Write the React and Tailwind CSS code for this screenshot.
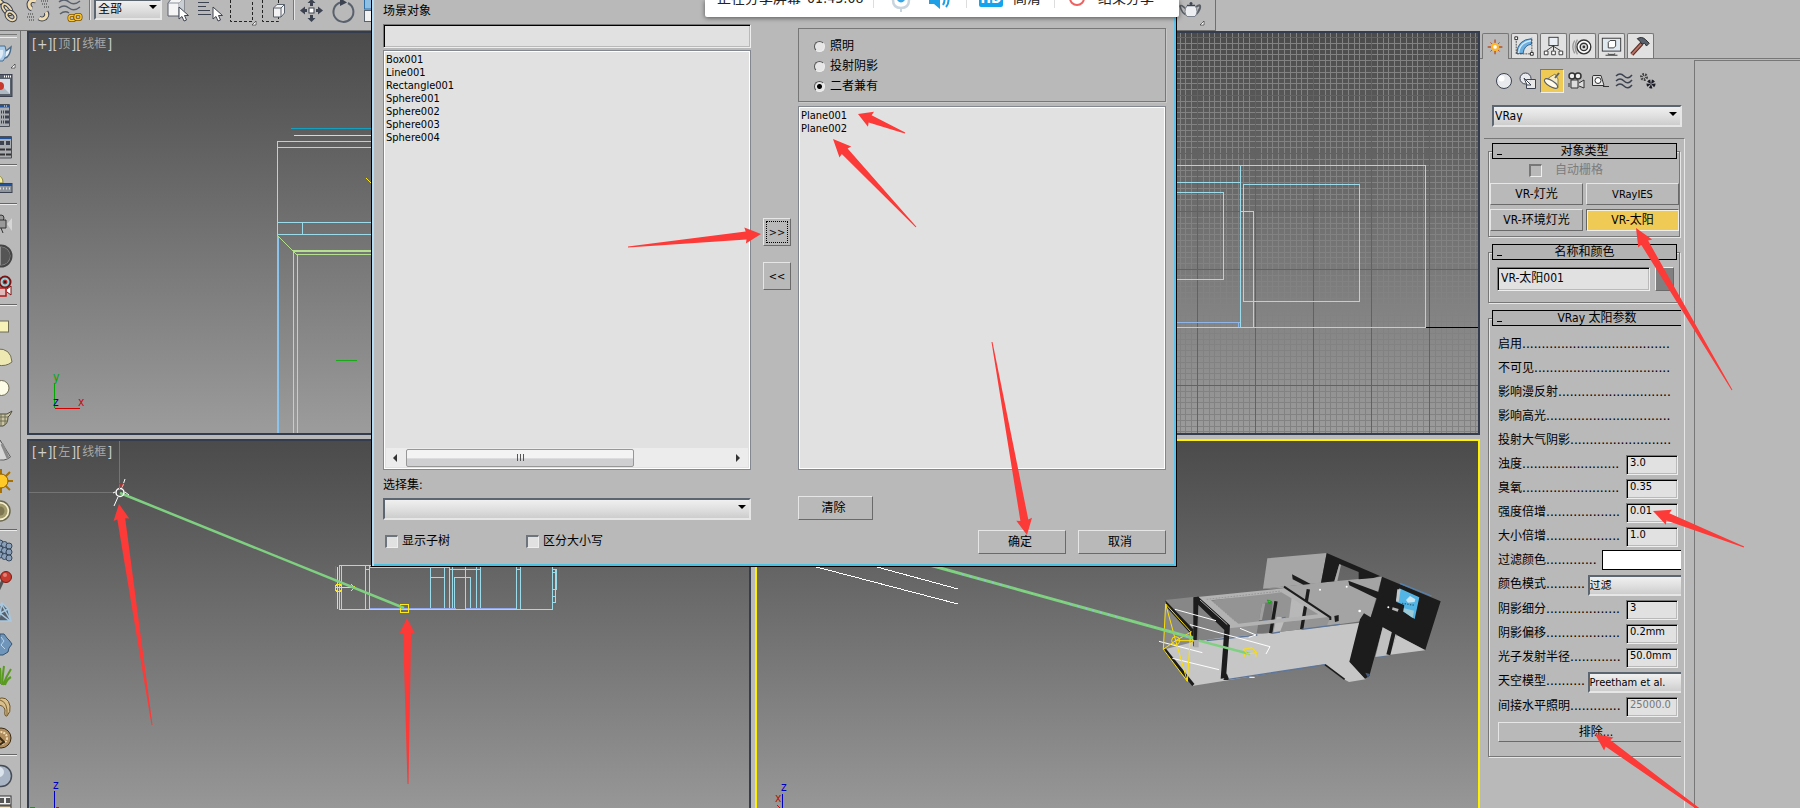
import React from "react";

const RAISED =
  "border border-t-[#e6e6e6] border-l-[#e6e6e6] border-b-[#6a6a6a] border-r-[#6a6a6a] bg-[#b9b9b9]";
const SUNKEN =
  "border border-t-[#777] border-l-[#777] border-b-[#eee] border-r-[#eee] bg-[#e1e1e1] shadow-[inset_1px_1px_0_#000,inset_-1px_-1px_0_#b9b9b9]";
const COMBO =
  "appearance-none border-2 border-t-[#5c6670] border-l-[#5c6670] border-b-[#e6e6e6] border-r-[#e6e6e6] bg-linear-to-b from-[#f0f0f0] via-[#e0e0e0] via-50% to-[#cdcdcd] text-black";

/* ---------- main toolbar ---------- */

function Tool({ x, w, label, children }) {
  return (
    <button type="button" aria-label={label} className="block shrink-0">
      <svg width={w} height="30" viewBox={`${x} 0 ${w} 30`} fill="none">
        {children}
      </svg>
    </button>
  );
}

function Cursor({ x, y }) {
  return (
    <path
      transform={`translate(${x} ${y})`}
      d="M0 0 L0 12 L3 9.5 L5 14 L7.500 13 L5.500 8.500 L9.500 8.500 Z"
      fill="#fff"
      stroke="#3c4250"
    />
  );
}

function Chain({ d, color = "#3c4250", fill = "#f0dcae" }) {
  return (
    <>
      <path d={d} stroke={color} strokeWidth="5" />
      <path d={d} stroke={fill} strokeWidth="3" />
    </>
  );
}

function TeapotShape() {
  return (
    <>
      <path d="M1186 9 Q1181 4 1180 6 Q1182 14 1187 15" stroke="#5b6068" strokeWidth="1.500" />
      <path d="M1196 7 Q1201 3 1200 8 Q1199 12 1195 15" stroke="#5b6068" strokeWidth="2" />
      <path d="M1187 5.500 H1195 Q1199 12 1195 16.500 H1187 Q1183 12 1187 5.500Z" fill="#eceef1" stroke="#7d838c" />
      <path d="M1187 5.500h8" stroke="#3c4250" strokeWidth="1.500" />
      <circle cx="1191" cy="3.500" r="1.500" fill="#3c4250" />
    </>
  );
}

function MainToolbar() {
  return (
    <header className="flex h-[31px] shrink-0">
      <div className="flex max-w-[1216px] flex-1 justify-between border-r border-b border-[#6f6f6f]">
        <div className="flex">
          <Tool x={0} w={24} label="选择并链接">
            <Chain d="M-2 0 Q4 4 7 9" />
            <ellipse cx="7" cy="9" rx="6" ry="3" transform="rotate(50 7 9)" stroke="#3c4250" strokeWidth="4" />
            <ellipse cx="7" cy="9" rx="6" ry="3" transform="rotate(50 7 9)" stroke="#f0dcae" strokeWidth="2" />
            <ellipse cx="11" cy="16" rx="5" ry="3.500" transform="rotate(40 11 16)" stroke="#3c4250" strokeWidth="4" />
            <ellipse cx="11" cy="16" rx="5" ry="3.500" transform="rotate(40 11 16)" stroke="#f0dcae" strokeWidth="2" />
          </Tool>
          <Tool x={24} w={30} label="取消链接选择">
            <Chain d="M36 1 Q30 -1 29 4 Q29 8 32 9" />
            <Chain d="M46 12 Q48 15 45 18 Q42 20 39 18" />
            <path d="M41 1h7M42 4h6M44 7h5M28 14h6M27 17h7M29 20h6" stroke="#777" strokeWidth="2" strokeDasharray="1 1" />
          </Tool>
          <Tool x={54} w={34} label="绑定到空间扭曲">
            <path d="M59 2q5-4 10 0t11-1M59 8q5-4 10 0t11-1M60 14q5-4 9 -1" stroke="#59616d" strokeWidth="1.500" />
            <rect x="69" y="15.500" width="6" height="5" rx="2" stroke="#7a4d00" strokeWidth="3" />
            <rect x="69" y="15.500" width="6" height="5" rx="2" stroke="#ffc928" strokeWidth="1.500" />
            <rect x="75" y="14.500" width="6" height="5" rx="2" stroke="#7a4d00" strokeWidth="3" />
            <rect x="75" y="14.500" width="6" height="5" rx="2" stroke="#ffc928" strokeWidth="1.500" />
          </Tool>
          <div className="mr-1 ml-px h-5 w-px bg-[#777] shadow-[1px_0_0_#e6e6e6]" />
          <div className="relative -mt-1 h-[21px] w-[68px]">
            <select
              aria-label="选择过滤器"
              className={`h-full w-full pl-0.5 text-[12px] leading-none ${COMBO}`}
            >
              <option>全部</option>
            </select>
            <span className="pointer-events-none absolute top-[9px] right-[5px] border-x-4 border-t-4 border-x-transparent border-t-black" />
          </div>
          <Tool x={162} w={32} label="选择对象">
            <path d="M168 3 L172 -2 H184 V11 L179 16 H168Z" fill="#f5f5f5" stroke="#59616d" />
            <path d="M168 3H179V16M179 3L184 -2" stroke="#8b929b" />
            <path d="M179 3L184 -2V11L179 16Z" fill="#c9ced4" />
            <Cursor x={179} y={7} />
          </Tool>
          <Tool x={194} w={32} label="按名称选择">
            <path d="M198 2.500h11M198 6.500h8M198 10.500h12M198 14.500h13" stroke="#3c4250" />
            <Cursor x={213} y={7} />
          </Tool>
          <Tool x={226} w={32} label="矩形选择区域">
            <path d="M230.500 0V21.500H252.500V0" stroke="#222" strokeDasharray="3 2" />
            <path d="M256 21v4h-4z" fill="#fff" stroke="#000" strokeWidth=".5" />
          </Tool>
          <Tool x={258} w={32} label="窗口交叉">
            <path d="M262.500 0V21.500H278.500V17M278.500 0V4" stroke="#222" strokeDasharray="3 2" />
            <path d="M273.500 8 L277 4.500 H284.500 V13 L281 17 H273.500Z" fill="#f3f3f3" stroke="#59616d" />
            <path d="M273.500 8H281V17M281 8L284.500 4.500" stroke="#59616d" />
          </Tool>
          <div className="mx-[3px] h-5 w-px bg-[#777] shadow-[1px_0_0_#e6e6e6]" />
          <Tool x={297} w={30} label="选择并移动">
            <rect x="309" y="8" width="5" height="5" fill="#fff" stroke="#3c4250" />
            <path d="M303 10.500h4M316 10.500h4M311.500 2v4M311.500 15v4" stroke="#3c4250" strokeWidth="3" />
            <path d="M300 10.500l5-4v8zM323 10.500l-5-4v8zM311.500 -1l-4 4h8zM311.500 22l-4-4h8z" fill="#3c4250" />
          </Tool>
          <Tool x={327} w={33} label="选择并旋转">
            <path d="M340 2.500 A10 10 0 1 0 348 3" stroke="#59616d" strokeWidth="2" />
            <path d="M340 -2l7 4.500l-7 3.500z" fill="#3c4250" />
          </Tool>
          <Tool x={360} w={14} label="选择并缩放">
            <rect x="364.500" y="-4" width="12" height="13" fill="#8fc0e4" stroke="#2f6ea5" />
            <rect x="364.500" y="10.500" width="12" height="11" fill="#f2f2f2" stroke="#59616d" />
          </Tool>
        </div>
        <Tool x={1178} w={37} label="渲染产品">
          <TeapotShape />
          <path d="M1204 21v4h-4z" fill="#fff" stroke="#000" strokeWidth=".5" />
        </Tool>
      </div>
    </header>
  );
}

/* ---------- left strip ---------- */

const Win = ({ children }) => (
  <>
    <path d="M-4 4.500H9.500V26.500H-4Z" fill="#a9adb2" stroke="#4a4f57" />
    <path d="M-4 5H9V7.500H-4Z" fill="#20539b" />
    <path d="M4 6h4" stroke="#fff" strokeDasharray="1 1" />
    {children}
  </>
);

const SIDE_ICONS = [
  [
    ["茶壶", <><path d="M-2 8H5Q8 17 3 23H-2Z" fill="#a9cbe8" stroke="#4b6d8c" /><path d="M-2 12h5q1 6-3 9" fill="#dcebf6" /><path d="M6 13l5-4q-1 10-6 11" stroke="#4b6d8c" strokeWidth="1.500" fill="#e8f1f8" /><path d="M15 26v4h-4z" fill="#fff" stroke="#000" strokeWidth=".5" /></>],
    ["渲染帧窗口", <><rect x="-4" y="5.500" width="16" height="22" fill="#59616d" stroke="#3c4250" /><path d="M4 7.500h8" stroke="#fff" strokeWidth="2" strokeDasharray="1 1" /><rect x="-4" y="10" width="14" height="15" fill="#d5dce3" /><path d="M2 17l8 8h-12z" fill="#aeb9c4" /><circle cx="0" cy="17" r="4" fill="#c9382c" /></>],
    ["渲染设置", <Win><path d="M1 12h8M1 17h8M1 22h8" stroke="#3c4250" strokeWidth="3" strokeDasharray="1 1 1 1 4 0" /></Win>],
    ["曝光控制", <><path d="M-4 5.500H11.500V27H-4Z" fill="#a9adb2" stroke="#4a4f57" /><path d="M-4 6H11V8H-4Z" fill="#20539b" /><path d="M0 10h4v4H0zM6 10h4v4H6z" fill="#3c4250" /><path d="M0 18.500h11M0 23.500h11" stroke="#333" strokeWidth="2" strokeDasharray="5 1" /></>],
  ],
  [
    ["灯光列表", <><path d="M-2 6q5 0 5 7h-5z" fill="#f4eda5" stroke="#8d8748" /><rect x="-3" y="13.500" width="15" height="9" fill="#8e949b" stroke="#3c4250" /><path d="M-3 15h15" stroke="#20539b" strokeWidth="2" /><path d="M0 18.500h10" stroke="#ddd" strokeWidth="2" strokeDasharray="1 2" /></>],
  ],
  [
    ["摄影机", <><circle cx="1" cy="9" r="3" stroke="#333" fill="#999" /><path d="M-3 11H6V19H-3ZM1 19l2 5" stroke="#333" fill="#999" /><path d="M7 15l5-6v13z" fill="#d6d6d6" /></>],
    ["对比度", <><circle cx="1" cy="16" r="10.500" fill="#8e8e8e" stroke="#444" strokeWidth="2" /><path d="M1 7a9 9 0 0 1 0 18z" fill="#555" /></>],
    ["VR 摄影机", <><circle cx="5" cy="11" r="5.500" fill="#8fd3dc" stroke="#7a1313" strokeWidth="2" /><circle cx="5" cy="11" r="2" fill="#222" stroke="#d22" /><path d="M-2 17H6V25H-2Z" fill="#e2b9b9" stroke="#b01717" strokeWidth="1.500" /><path d="M7 18l4-3v9l-4-3" fill="#fff" stroke="#7a1313" /></>],
  ],
  [
    ["平面灯光", <rect x="-4" y="11" width="12.500" height="11" fill="#f7f3b8" stroke="#6f6c55" />],
    ["穹顶灯光", <path d="M-3 8Q11 7 12 21Q6 26 -3 24Z" fill="#eee9b3" stroke="#6f6c55" />],
    ["球体灯光", <circle cx="1.500" cy="16" r="7.500" fill="#fdfce6" stroke="#6f6c55" />],
    ["网格灯光", <><path d="M-3 11H7l5-3q-2 5-4 6Q8 21 3 23H-3Z" fill="#c9c5a3" stroke="#4c4a3c" /><path d="M-3 14h11M-3 18h10M1 11v12M5 11v11" stroke="#6f6c55" /></>],
    ["IES 灯光", <><path d="M0 6L10.500 23Q4 28 -3 25Z" fill="#d7d7d7" stroke="#5c5c5c" /><path d="M2 10l6 14" stroke="#8a8a8a" strokeWidth="3" /></>],
    ["VR 太阳", <><path d="M-11 16h24M1 4v24M-8 8l18 17M10 7l-18 18" stroke="#a87000" strokeWidth="2" /><circle cx="1" cy="16" r="7" fill="#ffc928" stroke="#8a5b00" /></>],
    ["环境灯光", <><circle cx="0" cy="15" r="10" fill="#f4eecb" stroke="#6b684f" strokeWidth="1.500" /><circle cx="0" cy="15" r="7.500" fill="#a39b6e" /><circle cx="0" cy="15" r="4.500" fill="#7d7651" /></>],
  ],
  [
    ["实例", <>{[0, 1, 2].map((i) => [0, 1, 2].map((j) => <circle key={`${i}${j}`} cx={i * 4.5} cy={8 + j * 6 + i * 1.5} r="3" fill="#8aa0b8" stroke="#36475a" />))}</>],
    ["位移", <><path d="M4 12L-2 25" stroke="#555" strokeWidth="3" /><circle cx="6" cy="11" r="5.500" fill="#c83b2f" stroke="#7a1c15" /><circle cx="5" cy="9" r="2" fill="#e08177" /></>],
    ["代理", <path d="M-3 24H11L8 12L2 6L-3 12M2 6L-1 22M2 8L11 24M-3 18L8 12M-3 14L10 24" stroke="#a8c8e0" strokeWidth="1.500" fill="#56616c" />],
    ["石块", <><path d="M0 6l4 0 3 4 2 2 3 4-3 4-1 4-5 3-4 0z" fill="#6f95ba" stroke="#36536f" /><path d="M1 9l3 4-3 4 4 4" stroke="#b8d2e8" /></>],
    ["毛草", <path d="M-2 26Q1 20 -1 13M2 26Q3 14 4 7M3 26Q6 18 11 10M5 26q2-6 6-8M0 25Q1 14 0 9" stroke="#5a9a22" strokeWidth="2" />],
    ["毛发", <><path d="M-3 9Q8 5 10 16Q11 22 7 26Q4 27 5 20Q4 15 -3 15Z" fill="#d8bf8d" stroke="#6d5528" /><path d="M0 10q8 2 7 15" stroke="#7d6332" /></>],
    ["毛皮", <><circle cx="1" cy="17" r="10" fill="#b08d5e" stroke="#3a2a14" /><circle cx="1" cy="17" r="6" stroke="#f0dcb4" strokeWidth="2" strokeDasharray="2 1" /><path d="M-1 16l5 5-5 3" stroke="#3a2a14" strokeWidth="2" /></>],
  ],
  [
    ["材质球", <><circle cx="1" cy="16" r="10.500" fill="#a9b5c4" stroke="#454c56" strokeWidth="1.500" /><circle cx="-1" cy="12" r="5" fill="#dbe3ec" /></>],
    ["材质库", <><rect x="-4" y="5" width="15" height="9" fill="#eee" stroke="#333" /><path d="M0 7h4v5H0zM6 7h4v5H6z" fill="#555" /><rect x="-4" y="15" width="15" height="12" fill="#f6e0b8" stroke="#333" /></>],
  ],
];

function SideStrip() {
  return (
    <nav aria-label="VRay 工具" className="w-[21px] shrink-0 overflow-hidden border-r border-[#6f6f6f] pt-[3px]">
      <div className="h-1 w-[17px] border-t border-b border-t-[#777] border-b-[#ececec]" />
      {SIDE_ICONS.map((group, g) => (
        <div key={g}>
          {g > 0 && (
            <div className="h-2 pt-0.5">
              <div className="h-0.5 w-[17px] border-t border-t-[#666] bg-[#ececec]" />
            </div>
          )}
          {group.map(([label, art]) => (
            <button key={label} type="button" aria-label={label} className="block h-[31px]">
              <svg width="18" height="31" viewBox="0 0 18 31" fill="none">
                {art}
              </svg>
            </button>
          ))}
        </div>
      ))}
    </nav>
  );
}

/* ---------- viewports ---------- */

function Viewport({ view, mode, active, lower, children }) {
  return (
    <section
      className={`relative min-w-0 overflow-hidden border-2 bg-linear-to-b from-[#4b4b4b] ${lower ? "border-b-0 to-[#979797]" : "to-[#9c9c9c]"} ${active ? "border-[#fff200]" : "border-[#333d4d]"}`}
    >
      <svg className="absolute inset-0 h-full w-full" fill="none" shapeRendering="crispEdges">
        {children}
      </svg>
      {view && (
        <div className="relative flex h-[22px] items-center pl-[3px] text-[14px] text-[#cfcfcf]">
          [+][<span className="px-px text-[12px] text-[#a8a8a8]">{view}</span>][
          <span className="px-px text-[12px] text-[#a8a8a8]">{mode}</span>]
        </div>
      )}
    </section>
  );
}

const CYAN = "#9bdcea";
const axis = "text-[12px] font-normal";

function TopView() {
  return (
    <g transform="translate(-29 -33)">
      <path d="M291 128.500H760" stroke="#14a0c0" />
      <path d="M294 135.500H760M366 178l6 6" stroke="#ffe81a" />
      <path d="M760 141.500H277.500V236M278 147.500H760M278 222.500H760M278 234.500H760M302.500 222V235" stroke={CYAN} />
      <path d="M278 236V433" stroke="#8cc4f0" strokeWidth="2" />
      <path d="M278 236L297 255M293.500 433V250.500H760M293 251.500H760M297.500 433V254.500H760" stroke="#b5e08f" />
      <path d="M336 360.500H357" stroke="#18a818" />
      <path d="M54.500 383V408" stroke="#00a800" />
      <path d="M55 408.500H80" stroke="#d40000" />
      <text x="53" y="381" className={axis} fill="#00a800">y</text>
      <text x="78" y="406" className={axis} fill="#c01010">x</text>
      <text x="53" y="406" className={axis} fill="#0000c0">z</text>
    </g>
  );
}

const range = (n) => Array.from({ length: n }, (_, i) => i);

function FrontView() {
  const minorX = range(130).map((i) => Math.round(733 + i * 5.8));
  const minorY = range(70).map((i) => Math.round(37 + i * 5.8));
  const majorX = range(13).map((i) => 791 + i * 58);
  const majorY = range(7).map((i) => 37 + i * 58);
  return (
    <g transform="translate(-757 -33)">
      <path
        stroke="#828282"
        d={minorX.map((x) => `M${x}.5 33V433`).join("") + minorY.map((y) => `M757 ${y}.5H1478`).join("")}
      />
      <path
        stroke="#626262"
        d={majorX.map((x) => `M${x}.5 33V433`).join("") + majorY.map((y) => `M757 ${y}.5H1478`).join("")}
      />
      <path d="M1176 322.500H1240M1238.500 322V327" stroke="#8fb4e8" />
      <path
        stroke={CYAN}
        d="M1170 165.500H1425.500V327.500H1170M1170 182.500H1240M1170 192.500H1223.500V279.500H1170M1240.500 165V327M1243.500 184.500H1359.500V301.500H1243.500ZM1240 211.500H1253.500V327"
      />
      <path d="M1426 327.500H1478" stroke="#000" />
    </g>
  );
}

function LeftView() {
  return (
    <g transform="translate(-29 -441)">
      <path d="M119.500 441V488M29 492.500H115" stroke="#747474" />
      <path d="M335.500 566V609" stroke="#1f8fa8" />
      <path
        stroke={CYAN}
        d="M553 565.500H339.500V609.500H552.500V560M341.500 566V609M365.500 566V609M365 569.500H369M369.500 566V609M430.500 560V609M444.500 560V609M431 577.500H444M449.500 560V609M452.500 560V609M454.500 577V609M455 577.500H470.500V609M465.500 560V609M476.500 560V609M480.500 560V609M450 569.500H480M516.500 560V609M520.500 560V609M516 569.500H520M553 569.500H556.500V589.500H553M553 572.500H556M555.500 570V602.500H553M553 596.500H556"
      />
      <path d="M370 608.500H456M466 608.500H516" stroke="#92a8ea" />
      <path d="M370 567.500H450" stroke="#b5e08f" />
      <path d="M337.500 567V609M335 587.500H355M351 584l4 3.500l-4 3.500M400.500 604.500h8v8h-8z" stroke="#ffe81a" />
      <circle cx="338.500" cy="588" r="3.500" stroke="#ffe81a" />
      <path d="M559.500 567V595" stroke="#8a6a14" />
      <path d="M120 493L404 608" stroke="#7fd081" strokeWidth="2.500" shapeRendering="auto" />
      <g shapeRendering="auto">
        <circle cx="120" cy="492.500" r="4" stroke="#fff" strokeWidth="1.500" />
        <path d="M125 479L122 488M118 497L114 506M115 492l-2 1M125 492l4 3" stroke="#fff" />
        <path d="M119 483l5 6M124 483l-5 6" stroke="#c43030" />
      </g>
      <path d="M54.500 791V812" stroke="#0000c0" />
      <text x="53" y="789" className={axis} fill="#0000c0">z</text>
      <path d="M30 807.500h5" stroke="#00a800" />
      <path d="M56 807.500h3" stroke="#c01010" />
    </g>
  );
}

function House() {
  return (
    <g transform="translate(1140 520) scale(.33333)" shapeRendering="auto">
      <path d="M382 115L560 99L543 188L369 206Z" fill="#a6a6a6" />
      <path d="M369 206L520 190L726 170L690 300L575 316L485 328L430 205Z" fill="#a4a4a4" />
      <path d="M560 99L720 168L700 174L656 178V156L598 132L583 184L543 188Z" fill="#1c1c1c" />
      <path d="M598 132L583 184H592L603 135Z" fill="#a9a9a9" />
      <path d="M456 163L512 192L490 194L458 178Z" fill="#1c1c1c" />
      <path d="M75 240L165 230L168 372L72 388Z" fill="#878787" />
      <path d="M175 250L268 325L262 352L175 365Z" fill="#828282" />
      <path d="M74 388L160 366L262 350L395 338L485 328L660 308L630 425L677 478L627 486L612 478L555 433L255 482L160 497Z" fill="#c6c6c6" />
      <path d="M190 245L430 212L572 290L560 318L485 328L395 338L270 350L268 322Z" fill="#949494" />
      <path d="M456 225L500 250L488 300L446 303Z" fill="#b8b8b8" />
      <path d="M366 250L350 340L392 338L398 245Z" fill="#747474" />
      <path d="M366 250h10L366 300H357Z" fill="#a0a0a0" />
      <path d="M408 244L392 340" stroke="#1c1c1c" strokeWidth="10" />
      <path d="M410 290L437 292L420 336L400 338Z" fill="#bdbdbd" />
      <path d="M505 208L485 328" stroke="#1c1c1c" strokeWidth="10" />
      <path d="M485 328L600 313M395 340L420 336M200 362L352 345M425 294l12-2M372 300h14" stroke="#5e7699" strokeWidth="4" />
      <path fillRule="evenodd" d="M165 232L430 205L572 290L268 325ZM214 241L424 217L535 283L295 311Z" fill="#b3b3b3" />
      <path d="M200 238L424 213M214 241L288 306" stroke="#888" strokeWidth="2" strokeDasharray="5 4" />
      <path d="M432 200L571 292V300" stroke="#1c1c1c" strokeWidth="6" />
      <path d="M583 288l13-3v18l-11 3z" fill="#1c1c1c" />
      <path d="M75 240L160 328V350L82 264Z" fill="#1c1c1c" />
      <path d="M160 232L176 230L170 366L160 380Z" fill="#1c1c1c" />
      <path d="M162 360h14v22h-14z" fill="#aaa" />
      <path d="M163 232L175 230L270 316L258 474L242 476L253 330L165 245Z" fill="#1c1c1c" />
      <path d="M180 240L262 314" stroke="#aaa" strokeWidth="3" />
      <path d="M74 388L160 495" stroke="#1c1c1c" strokeWidth="9" />
      <path d="M250 480l10-20 8 20z" fill="#1c1c1c" />
      <path d="M265 478L555 434M706 411L752 405" stroke="#5e7699" strokeWidth="4" />
      <path d="M555 434L614 478" stroke="#1c1c1c" strokeWidth="5" />
      <path d="M625 182L722 218L715 238L628 196Z" fill="#1c1c1c" />
      <path d="M726 170L902 244L856 390L768 346L728 322L688 468L675 476L628 425L660 298L672 280L692 292L712 230Z" fill="#1c1c1c" />
      <path d="M728 322L770 344L752 405L706 411Z" fill="#c0c0c0" />
      <path d="M770 345L856 391L750 404Z" fill="#c6c6c6" />
      <path d="M762 335L745 404" stroke="#1c1c1c" strokeWidth="12" />
      <path d="M780 190L875 228" stroke="#5284b5" strokeWidth="4" />
      <path d="M778 205L838 232L824 297L788 274L792 255L768 245Z" fill="#52b5e6" />
      <path d="M772 208h10l-6 38-8-4z" fill="#c4c8ca" />
      <path d="M798 240l12-12 16 10-2 8-20 2z" fill="#c9e4ee" />
      <path d="M790 264l32 8-4 22-28-20z" fill="#9ccbd8" />
      <path d="M786 250l38 6" stroke="#286a86" strokeWidth="4" strokeDasharray="4 4" />
      <path d="M755 248l38 8-4 20-36-18z" fill="#1c1c1c" />
      <path d="M758 262l18 5-3 8-17-6z" fill="#b5b5b5" />
      <path d="M676 458l14 4-6 12z" fill="#45597a" />
      <path d="M382 240l12 4-6 8zM388 248l8-4" stroke="#18a818" strokeWidth="3" />
      <path
        d="M105 268L228 302M150 314L390 380L378 402M57 364L187 398M97 415L237 449M300 325L348 345L326 352M328 472h16"
        stroke="#fff"
        strokeWidth="3"
      />
      <g fill="#fff">
        <circle cx="540" cy="209" r="3" />
        <circle cx="620" cy="200" r="3" />
        <circle cx="659" cy="273" r="4" />
        <circle cx="745" cy="262" r="3" />
      </g>
      <path d="M176 362L330 402" stroke="#7fd081" strokeWidth="7" />
      <g stroke="#ffe000" strokeWidth="3">
        <path d="M77 252L70 388L142 484L152 335ZM77 252L107 362L142 484M70 388L107 362L155 335M107 362H160M150 352l12 10-12 10" />
        <circle cx="107" cy="362" r="12" />
        <path d="M310 388L336 383L350 398L322 402ZM314 402v8M348 400v10" />
      </g>
    </g>
  );
}

function PerspectiveView() {
  return (
    <g transform="translate(-757 -441)">
      <path d="M805 564L958 604M866 564L958 589" stroke="#fff" />
      <House />
      <path d="M915 561L1193 638" stroke="#7fd081" strokeWidth="3" shapeRendering="auto" />
      <path d="M915 561L1193 638" stroke="#8cc8c8" strokeDasharray="2 6" />
      <path d="M782.500 794V812" stroke="#0000c0" />
      <text x="781" y="791" className={axis} fill="#0000c0">z</text>
      <text x="775" y="802" className={axis} fill="#c01010">x</text>
      <path d="M777 805l3 3" stroke="#c01010" />
    </g>
  );
}

/* ---------- exclude / include dialog ---------- */

function DialogButton({ className = "", children, label }) {
  return (
    <button type="button" aria-label={label} className={`${RAISED} text-[12px] leading-none ${className}`}>
      {children}
    </button>
  );
}

const LIST =
  "border border-[#828790] bg-[#e1e1e1] shadow-[inset_0_0_0_1px_#fff] text-[11px] leading-[13px] flex flex-col";

function CheckBox({ id, children }) {
  return (
    <label htmlFor={id} className="flex items-center gap-1 text-[12px] leading-none">
      <input
        id={id}
        type="checkbox"
        className="size-[13px] appearance-none border border-t-2 border-l-2 border-t-[#6d747c] border-l-[#6d747c] border-b-[#eee] border-r-[#eee] bg-[#e1e1e1]"
      />
      {children}
    </label>
  );
}

function Radio({ checked, name, children }) {
  return (
    <label className="flex h-5 items-center gap-[5px] text-[12px]">
      <input
        type="radio"
        name={name}
        defaultChecked={checked}
        className="size-[11px] appearance-none rounded-full border border-t-[#555] border-l-[#555] border-b-[#eee] border-r-[#eee] bg-[#e6e6e6] checked:bg-[radial-gradient(circle,#000_0_2px,#e6e6e6_3px)]"
      />
      {children}
    </label>
  );
}

function ExcludeDialog() {
  return (
    <div
      role="dialog"
      aria-label="排除/包含"
      className="absolute top-0 left-[371px] flex border border-t-0 border-black bg-[#b9b9b9] pr-[10px] pb-[12px] pl-[11px] shadow-[inset_2px_0_0_#b4dcf2,inset_-2px_0_0_#5cc4ec,inset_0_-2px_0_#4cc0e0]"
    >
      <div className="flex w-[368px] flex-col">
        <label htmlFor="scene-filter" className="h-6 pt-0.5 text-[12px] leading-[18px]">
          场景对象
        </label>
        <input id="scene-filter" className={`h-6 w-full px-1 text-[11px] ${SUNKEN}`} />
        <div className={`mt-0.5 h-[420px] p-0.5 ${LIST}`}>
          <ul role="listbox" aria-label="场景对象列表" className="flex-1">
            {["Box001", "Line001", "Rectangle001", "Sphere001", "Sphere002", "Sphere003", "Sphere004"].map((n) => (
              <li key={n} role="option" aria-selected="false">
                {n}
              </li>
            ))}
          </ul>
          <div className="flex h-[19px] items-center bg-[#ececec]">
            <button type="button" aria-label="向左滚动" className="flex h-full w-5 items-center pl-[7px]">
              <span className="border-y-4 border-r-4 border-y-transparent border-r-[#333]" />
            </button>
            <div className="flex h-[18px] w-[228px] items-center justify-center gap-0.5 rounded-xs border border-[#979797] bg-linear-to-b from-[#f3f3f3] from-50% to-[#cfcfd2] to-55%">
              <span className="h-[7px] w-px bg-[#555]" />
              <span className="h-[7px] w-px bg-[#555]" />
              <span className="h-[7px] w-px bg-[#555]" />
            </div>
            <button type="button" aria-label="向右滚动" className="ml-auto flex h-full w-5 items-center justify-center">
              <span className="border-y-4 border-l-4 border-y-transparent border-l-[#333]" />
            </button>
          </div>
        </div>
        <label htmlFor="selection-set" className="mt-[7px] h-4 text-[12px] leading-4">
          选择集:
        </label>
        <div className="relative mt-[3px] h-[22px]">
          <select id="selection-set" className={`h-full w-full text-[12px] ${COMBO}`}>
            <option></option>
          </select>
          <span className="pointer-events-none absolute top-[9px] right-[5px] border-x-4 border-t-4 border-x-transparent border-t-black" />
        </div>
        <div className="mt-[15px] flex h-4 items-center pl-0.5">
          <div className="w-[141px]">
            <CheckBox id="show-subtree">显示子树</CheckBox>
          </div>
          <CheckBox id="case-sensitive">区分大小写</CheckBox>
        </div>
      </div>

      <div className="mt-[218px] ml-3 flex w-7 flex-col gap-4">
        <DialogButton label="添加" className="h-7 p-0.5 text-[#111]">
          <span className="flex h-full items-center justify-center border border-dotted border-black text-[11px]">
            &gt;&gt;
          </span>
        </DialogButton>
        <DialogButton label="移除" className="h-7">
          <span className="text-[11px]">&lt;&lt;</span>
        </DialogButton>
      </div>

      <div className="ml-[7px] flex w-[368px] flex-col">
        <div className="flex h-7 pt-1 pl-5 text-[12px] leading-4">
          <span className="w-[111px]">包含</span>
          <span>排除</span>
        </div>
        <fieldset
          aria-label="类型"
          className="h-[74px] border border-[#777] pt-[7px] pl-[15px] shadow-[1px_1px_0_#c8c8c8]"
        >
          <Radio name="kind">照明</Radio>
          <Radio name="kind">投射阴影</Radio>
          <Radio name="kind" checked>
            二者兼有
          </Radio>
        </fieldset>
        <ul role="listbox" aria-label="排除对象列表" className={`mt-1 h-[364px] p-0.5 ${LIST}`}>
          <li role="option" aria-selected="false">Plane001</li>
          <li role="option" aria-selected="false">Plane002</li>
        </ul>
        <DialogButton className="mt-[26px] h-6 w-[75px] pr-1">清除</DialogButton>
        <div className="mt-[10px] flex justify-end gap-3">
          <DialogButton className="h-6 w-[88px] pr-1">确定</DialogButton>
          <DialogButton className="h-6 w-[88px] pr-1">取消</DialogButton>
        </div>
      </div>
    </div>
  );
}

function ShareBar() {
  return (
    <div className="absolute top-0 left-[705px] h-[17px] w-[474px] rounded-b-xs bg-white shadow-[0_1px_5px_rgba(0,0,0,0.55)]">
      <div className="-mt-3 flex h-5 items-center pl-3 text-[14px] text-[#222]">
        <span className="w-[90px] whitespace-nowrap">正在分享屏幕</span>
        <span className="w-[66px] whitespace-nowrap">01:43:08</span>
        <span className="h-5 w-px bg-[#ddd]" />
        <svg className="mt-4 ml-4" width="22" height="20" viewBox="0 0 22 20" fill="none">
          <path d="M3 4q0 8 8 8t8-8" stroke="#c8d4de" strokeWidth="2.500" />
          <path d="M11 12v4" stroke="#c8d4de" strokeWidth="2" />
          <path d="M7 0h8v4q-4 5-8 0z" fill="#3aa5e3" />
        </svg>
        <svg className="mt-4 ml-4" width="24" height="20" viewBox="0 0 24 20" fill="none">
          <path d="M1 1h5l6-5v17l-6-5H1z" fill="#1e9fe6" />
          <path d="M15 0q3 4 0 9M18-2q5 7 0 13" stroke="#1e9fe6" strokeWidth="2" />
        </svg>
        <span className="ml-[14px] h-5 w-px bg-[#ddd]" />
        <span className="ml-3 flex h-[18px] w-6 items-center justify-center rounded-xs bg-[#12a4ec] text-[14px] font-bold text-white">
          HD
        </span>
        <span className="ml-[10px]">高清</span>
        <span className="ml-[13px] h-5 w-px bg-[#ddd]" />
        <span className="ml-[14px] size-4 rounded-full border-2 border-[#f06060]" />
        <span className="ml-[13px] whitespace-nowrap">结束分享</span>
      </div>
    </div>
  );
}

/* ---------- command panel ---------- */

const TABS = [
  ["创建", <><path d="M14 6v16M6 14h16" stroke="#b4502a" strokeWidth="1.500" /><path d="M9 9l10 10M19 9L9 19" stroke="#b4502a" /><circle cx="14" cy="14" r="4.500" fill="#ffb52b" /><circle cx="14" cy="14" r="2" fill="#fff" /></>],
  ["修改", <><path d="M6 21Q7 6 22 5V11Q14 12 13 21Z" fill="#6cb0e2" stroke="#2c5f8c" /><path d="M8 21Q9 9 22 7" stroke="#d4ebfa" strokeWidth="1.500" /><path d="M5.500 4.500V21.500H22.500V4" stroke="#444" strokeDasharray="2 1" /><path d="M4 3h3v3H4zM21 20h3v3h-3z" fill="#fff" stroke="#222" /></>],
  ["层次", <><rect x="9.500" y="3.500" width="10" height="9" fill="#e8eef4" stroke="#333" /><path d="M14.500 12V18M7 18L14 13L22 18" stroke="#333" /><path d="M4.500 18.500h4v4h-4zM12.500 18.500h4v4h-4zM20.500 18.500h4v4h-4z" fill="#fff" stroke="#333" /></>],
  ["运动", <><path d="M9 6q-5 8 0 16M6 7q-4 7 0 14" stroke="#999" strokeWidth="1.500" /><circle cx="16" cy="14" r="7.500" fill="#fff" stroke="#333" strokeWidth="1.500" /><circle cx="16" cy="14" r="4" fill="#ddd" stroke="#333" strokeWidth="1.500" /><circle cx="16" cy="14" r="1.500" fill="#333" /></>],
  ["显示", <><rect x="4.500" y="4.500" width="20" height="14" fill="#dfe7ef" stroke="#333" /><path d="M11 9l2-2h6v6l-2 2h-6zM11 21v1h7v-1M8 23h13" fill="#fff" stroke="#333" /></>],
  ["实用程序", <><path d="M5 22L16 10" stroke="#5b2f24" strokeWidth="4.500" /><path d="M5 22L16 10" stroke="#b8756a" strokeWidth="2" /><path d="M11 5q5-3 9 1l4 4-3 3-2-3-3 1-2-3z" fill="#59616d" stroke="#222" /></>],
];

const CATEGORIES = [
  ["几何体", <><circle cx="12" cy="12" r="7.500" fill="#e8eaed" stroke="#3c4250" /><circle cx="9.500" cy="9.500" r="3" fill="#fff" /></>],
  ["图形", <><circle cx="9.500" cy="9.500" r="5.500" fill="#e8eaed" stroke="#3c4250" /><path d="M10.500 10.500h9v9h-9z" stroke="#3c4250" fill="#f4f4f4" fillOpacity=".8" /><path d="M8 9l7 7h-4z" stroke="#3c4250" fill="#fff" /></>],
  ["灯光", <><path d="M5 12Q8 19 18 19L18 10L15 5L10 8Z" fill="#f5ecc6" stroke="#8b8350" /><path d="M15 9L19 4" stroke="#59616d" strokeWidth="2" /><ellipse cx="11" cy="14.500" rx="7.500" ry="3" transform="rotate(32 11 14.500)" fill="#fffbe8" stroke="#59616d" /></>],
  ["摄影机", <><circle cx="8" cy="7" r="3" fill="#eee" stroke="#333" strokeWidth="1.500" /><circle cx="14" cy="7" r="3" fill="#eee" stroke="#333" strokeWidth="1.500" /><path d="M7 11h7v8H7zM15 14l5-3v8l-5-2M5 14v4" fill="#ddd" stroke="#333" /></>],
  ["辅助对象", <><path d="M4.500 7.500Q4.500 6.500 6 6.500H13L16 16.500H4.500Z" fill="#e6e6e6" stroke="#333" /><path d="M15 17.500h6" stroke="#333" /><circle cx="10" cy="11.500" r="3" fill="#fff" stroke="#333" /></>],
  ["空间扭曲", <path d="M4 7q4-4 8 0t8-1M4 12q4-4 8 0t8-1M4 17q4-4 8 0t8-1" stroke="#3c4250" strokeWidth="1.500" />],
  ["系统", <><circle cx="8" cy="8" r="2.500" stroke="#444" strokeWidth="3" strokeDasharray="1.500 1" /><circle cx="15" cy="15" r="2.500" stroke="#1b1b26" strokeWidth="4" strokeDasharray="2 1" /></>],
];

function Rollout({ title, className = "", open, children }) {
  return (
    <section
      className={`border border-[#777] shadow-[1px_1px_0_#e6e6e6,inset_1px_1px_0_#e6e6e6] ${open ? "w-[205px]" : "w-[192px]"} ${className}`}
    >
      <button
        type="button"
        className={`relative -mt-[9px] ml-[3px] flex h-4 items-center justify-center border border-black bg-[#b3b3b3] text-[12px] leading-none ${open ? "w-[210px]" : "w-[185px]"}`}
      >
        <span className="absolute bottom-[3px] left-1 h-px w-[5px] bg-black" />
        {title}
      </button>
      {children}
    </section>
  );
}

const FLAGS = [
  ["启用", 38],
  ["不可见", 35],
  ["影响漫反射", 29],
  ["影响高光", 32],
  ["投射大气阴影", 26],
];

function RowLabel({ id, name, dots }) {
  return (
    <label htmlFor={id} className="flex items-baseline pb-0.5 text-[12px] leading-5 whitespace-nowrap">
      {name}
      <span className="font-['Liberation_Sans',sans-serif] text-[14px]">{".".repeat(dots)}</span>
    </label>
  );
}

function Field({ id, name, dots, value, disabled }) {
  return (
    <div className="flex h-6 items-center">
      <div className="w-[128px]">
        <RowLabel id={id} name={name} dots={dots} />
      </div>
      <input
        id={id}
        defaultValue={value}
        disabled={disabled}
        className={`mt-px h-5 w-[52px] px-[3px] pb-1 text-[11px] disabled:text-[#777] ${SUNKEN}`}
      />
    </div>
  );
}

function Choice({ id, name, dots, value }) {
  return (
    <div className="flex h-[25px] items-center">
      <div className="w-[91px]">
        <RowLabel id={id} name={name} dots={dots} />
      </div>
      <select id={id} className={`mt-0.5 h-[21px] w-[106px] text-[11px] leading-none ${COMBO}`}>
        <option>{value}</option>
      </select>
    </div>
  );
}

function CommandPanel() {
  return (
    <aside className="flex w-[320px] shrink-0 flex-col">
      <div role="tablist" className="mt-0.5 flex h-[26px] gap-0.5 border-b border-[#777] pl-0.5">
        {TABS.map(([label, art], i) => (
          <button
            key={label}
            type="button"
            role="tab"
            aria-label={label}
            aria-selected={i === 0}
            className={`w-[27px] rounded-t-xs border border-b-0 border-[#777] ${i === 0 ? "h-[26px] bg-[#b9b9b9]" : "h-[25px] bg-[#e1e1e1]"}`}
          >
            <svg width="25" height="23" viewBox="1 1 27 25" fill="none">
              {art}
            </svg>
          </button>
        ))}
      </div>
      <div className="flex flex-1">
        <div className="w-[214px] shrink-0 overflow-hidden">
          <div className="mt-[10px] ml-3 flex">
            {CATEGORIES.map(([label, art], i) => (
              <button
                key={label}
                type="button"
                aria-label={label}
                className={`size-6 border ${i === 2 ? "border-t-[#777] border-l-[#777] border-b-[#eee] border-r-[#eee] bg-[#efcb55]" : "border-transparent"}`}
              >
                <svg width="22" height="22" viewBox="1 1 22 22" fill="none">
                  {art}
                </svg>
              </button>
            ))}
          </div>
          <div className="relative mt-[10px] ml-3 h-[22px] w-[190px]">
            <select aria-label="灯光类别" className={`h-full w-full pl-px text-[12px] leading-none ${COMBO}`}>
              <option>VRay</option>
            </select>
            <span className="pointer-events-none absolute top-[9px] right-[5px] border-x-4 border-t-4 border-x-transparent border-t-black" />
          </div>

          <div className="mt-[13px] ml-1 h-[700px] w-[201px] border-t border-r border-t-[#777] border-r-[#e6e6e6]">
            <div className="ml-1 w-[193px] overflow-hidden">
              <Rollout title="对象类型" className="mt-[12px] h-[86px]">
                <label htmlFor="autogrid" className="ml-10 flex h-[22px] items-center gap-[13px] text-[12px] text-[#7c7c7c]">
                  <input
                    id="autogrid"
                    type="checkbox"
                    disabled
                    className="size-[13px] appearance-none border border-t-2 border-l-2 border-t-[#777] border-l-[#777] border-b-[#eee] border-r-[#eee] bg-[#b9b9b9]"
                  />
                  自动栅格
                </label>
                <div className="mt-0.5 ml-px grid w-[189px] grid-cols-2 gap-x-[3px] gap-y-1 text-[12px]">
                  <button type="button" className={`h-[22px] leading-none ${RAISED}`}>VR-灯光</button>
                  <button type="button" className={`h-[22px] text-[11px] leading-none ${RAISED}`}>VRayIES</button>
                  <button type="button" className={`h-[22px] leading-none ${RAISED}`}>VR-环境灯光</button>
                  <button
                    type="button"
                    className="h-[22px] border border-t-[#666] border-l-[#666] border-b-[#eee] border-r-[#eee] bg-[#efcb55] leading-none shadow-[inset_1px_1px_0_#f3f0e0]"
                  >
                    VR-太阳
                  </button>
                </div>
              </Rollout>

              <Rollout title="名称和颜色" className="mt-[15px] h-[51px]">
                <div className="mt-[7px] ml-2 flex gap-[5px]">
                  <input aria-label="名称" defaultValue="VR-太阳001" className={`h-6 w-[153px] px-[3px] pb-1.5 text-[12px] ${SUNKEN}`} />
                  <button
                    type="button"
                    aria-label="对象颜色"
                    className="h-6 w-[19px] border border-t-[#eee] border-l-[#eee] border-b-[#6a6a6a] border-r-[#6a6a6a] bg-[#808080]"
                  />
                </div>
              </Rollout>

              <Rollout title="VRay 太阳参数" open className="mt-[15px] mb-1">
                <div className="mt-[6px] pb-[14px] pl-[9px]">
                  {FLAGS.map(([name, dots]) => (
                    <div key={name} className="flex h-6 items-center">
                      <RowLabel name={name} dots={dots} />
                    </div>
                  ))}
                  <Field id="turbidity" name="浊度" dots={25} value="3.0" />
                  <Field id="ozone" name="臭氧" dots={25} value="0.35" />
                  <Field id="intensity" name="强度倍增" dots={19} value="0.01" />
                  <Field id="size" name="大小倍增" dots={19} value="1.0" />
                  <div className="flex h-6 items-center">
                    <div className="w-[105px]">
                      <RowLabel id="filter-color" name="过滤颜色" dots={13} />
                    </div>
                    <button id="filter-color" type="button" aria-label="过滤颜色" className="h-5 w-[91px] border border-black bg-white" />
                  </div>
                  <Choice id="color-mode" name="颜色模式" dots={10} value="过滤" />
                  <Field id="shadow-subdivs" name="阴影细分" dots={19} value="3" />
                  <Field id="shadow-bias" name="阴影偏移" dots={19} value="0.2mm" />
                  <Field id="photon-radius" name="光子发射半径" dots={13} value="50.0mm" />
                  <Choice id="sky-model" name="天空模型" dots={10} value="Preetham et al." />
                  <Field id="horiz-illum" name="间接水平照明" dots={13} value="25000.0" disabled />
                  <button type="button" className={`mt-1 block h-5 w-[196px] text-[12px] leading-none ${RAISED}`}>
                    排除...
                  </button>
                </div>
              </Rollout>
            </div>
          </div>
        </div>
        <div className="mt-px flex-1 border-t border-l border-[#777]" />
      </div>
    </aside>
  );
}

/* ---------- annotation arrows ---------- */

const ARROWS = [
  { tip: [119, 504], tail: [152, 725] },
  { tip: [407, 618], tail: [408, 784] },
  { tip: [761, 234], tail: [628, 247] },
  { tip: [858, 114], tail: [905, 133], size: 14 },
  { tip: [833, 139], tail: [916, 227], size: 18 },
  { tip: [1027, 535], tail: [992, 342] },
  { tip: [1636, 228], tail: [1732, 390], size: 18 },
  { tip: [1653, 511], tail: [1744, 547], size: 17 },
  { tip: [1595, 734], tail: [1722, 826], size: 17 },
];

function Arrow({ tip, tail, size = 16 }) {
  const dx = tail[0] - tip[0];
  const dy = tail[1] - tip[1];
  const len = Math.hypot(dx, dy);
  const at = (along, side) => {
    const x = tip[0] + (dx / len) * along - (dy / len) * side;
    const y = tip[1] + (dy / len) * along + (dx / len) * side;
    return `${x.toFixed(1)},${y.toFixed(1)}`;
  };
  const pts = [at(0, 0), at(size, 8), at(size - 1, 4), at(len, 0.5), at(len, -0.5), at(size - 1, -4), at(size, -8)];
  return <polygon points={pts.join(" ")} fill="#fc3a38" />;
}

export default function App() {
  return (
    <div className="relative flex h-screen flex-col overflow-hidden bg-[#b9b9b9] font-['DejaVu_Sans_Condensed','Noto_Sans_CJK_SC',sans-serif] text-black">
      <MainToolbar />
      <div className="flex min-h-0 flex-1">
        <SideStrip />
        <main className="ml-[6px] grid min-w-0 flex-1 grid-cols-[724fr_725fr] grid-rows-[404px_1fr] gap-1">
          <Viewport view="顶" mode="线框">
            <TopView />
          </Viewport>
          <Viewport>
            <FrontView />
          </Viewport>
          <Viewport view="左" mode="线框" lower>
            <LeftView />
          </Viewport>
          <Viewport active lower>
            <PerspectiveView />
          </Viewport>
        </main>
        <CommandPanel />
      </div>
      <ExcludeDialog />
      <ShareBar />
      <svg className="pointer-events-none absolute inset-0 h-full w-full" aria-hidden="true">
        {ARROWS.map((a) => (
          <Arrow key={a.tip.join()} {...a} />
        ))}
      </svg>
    </div>
  );
}
